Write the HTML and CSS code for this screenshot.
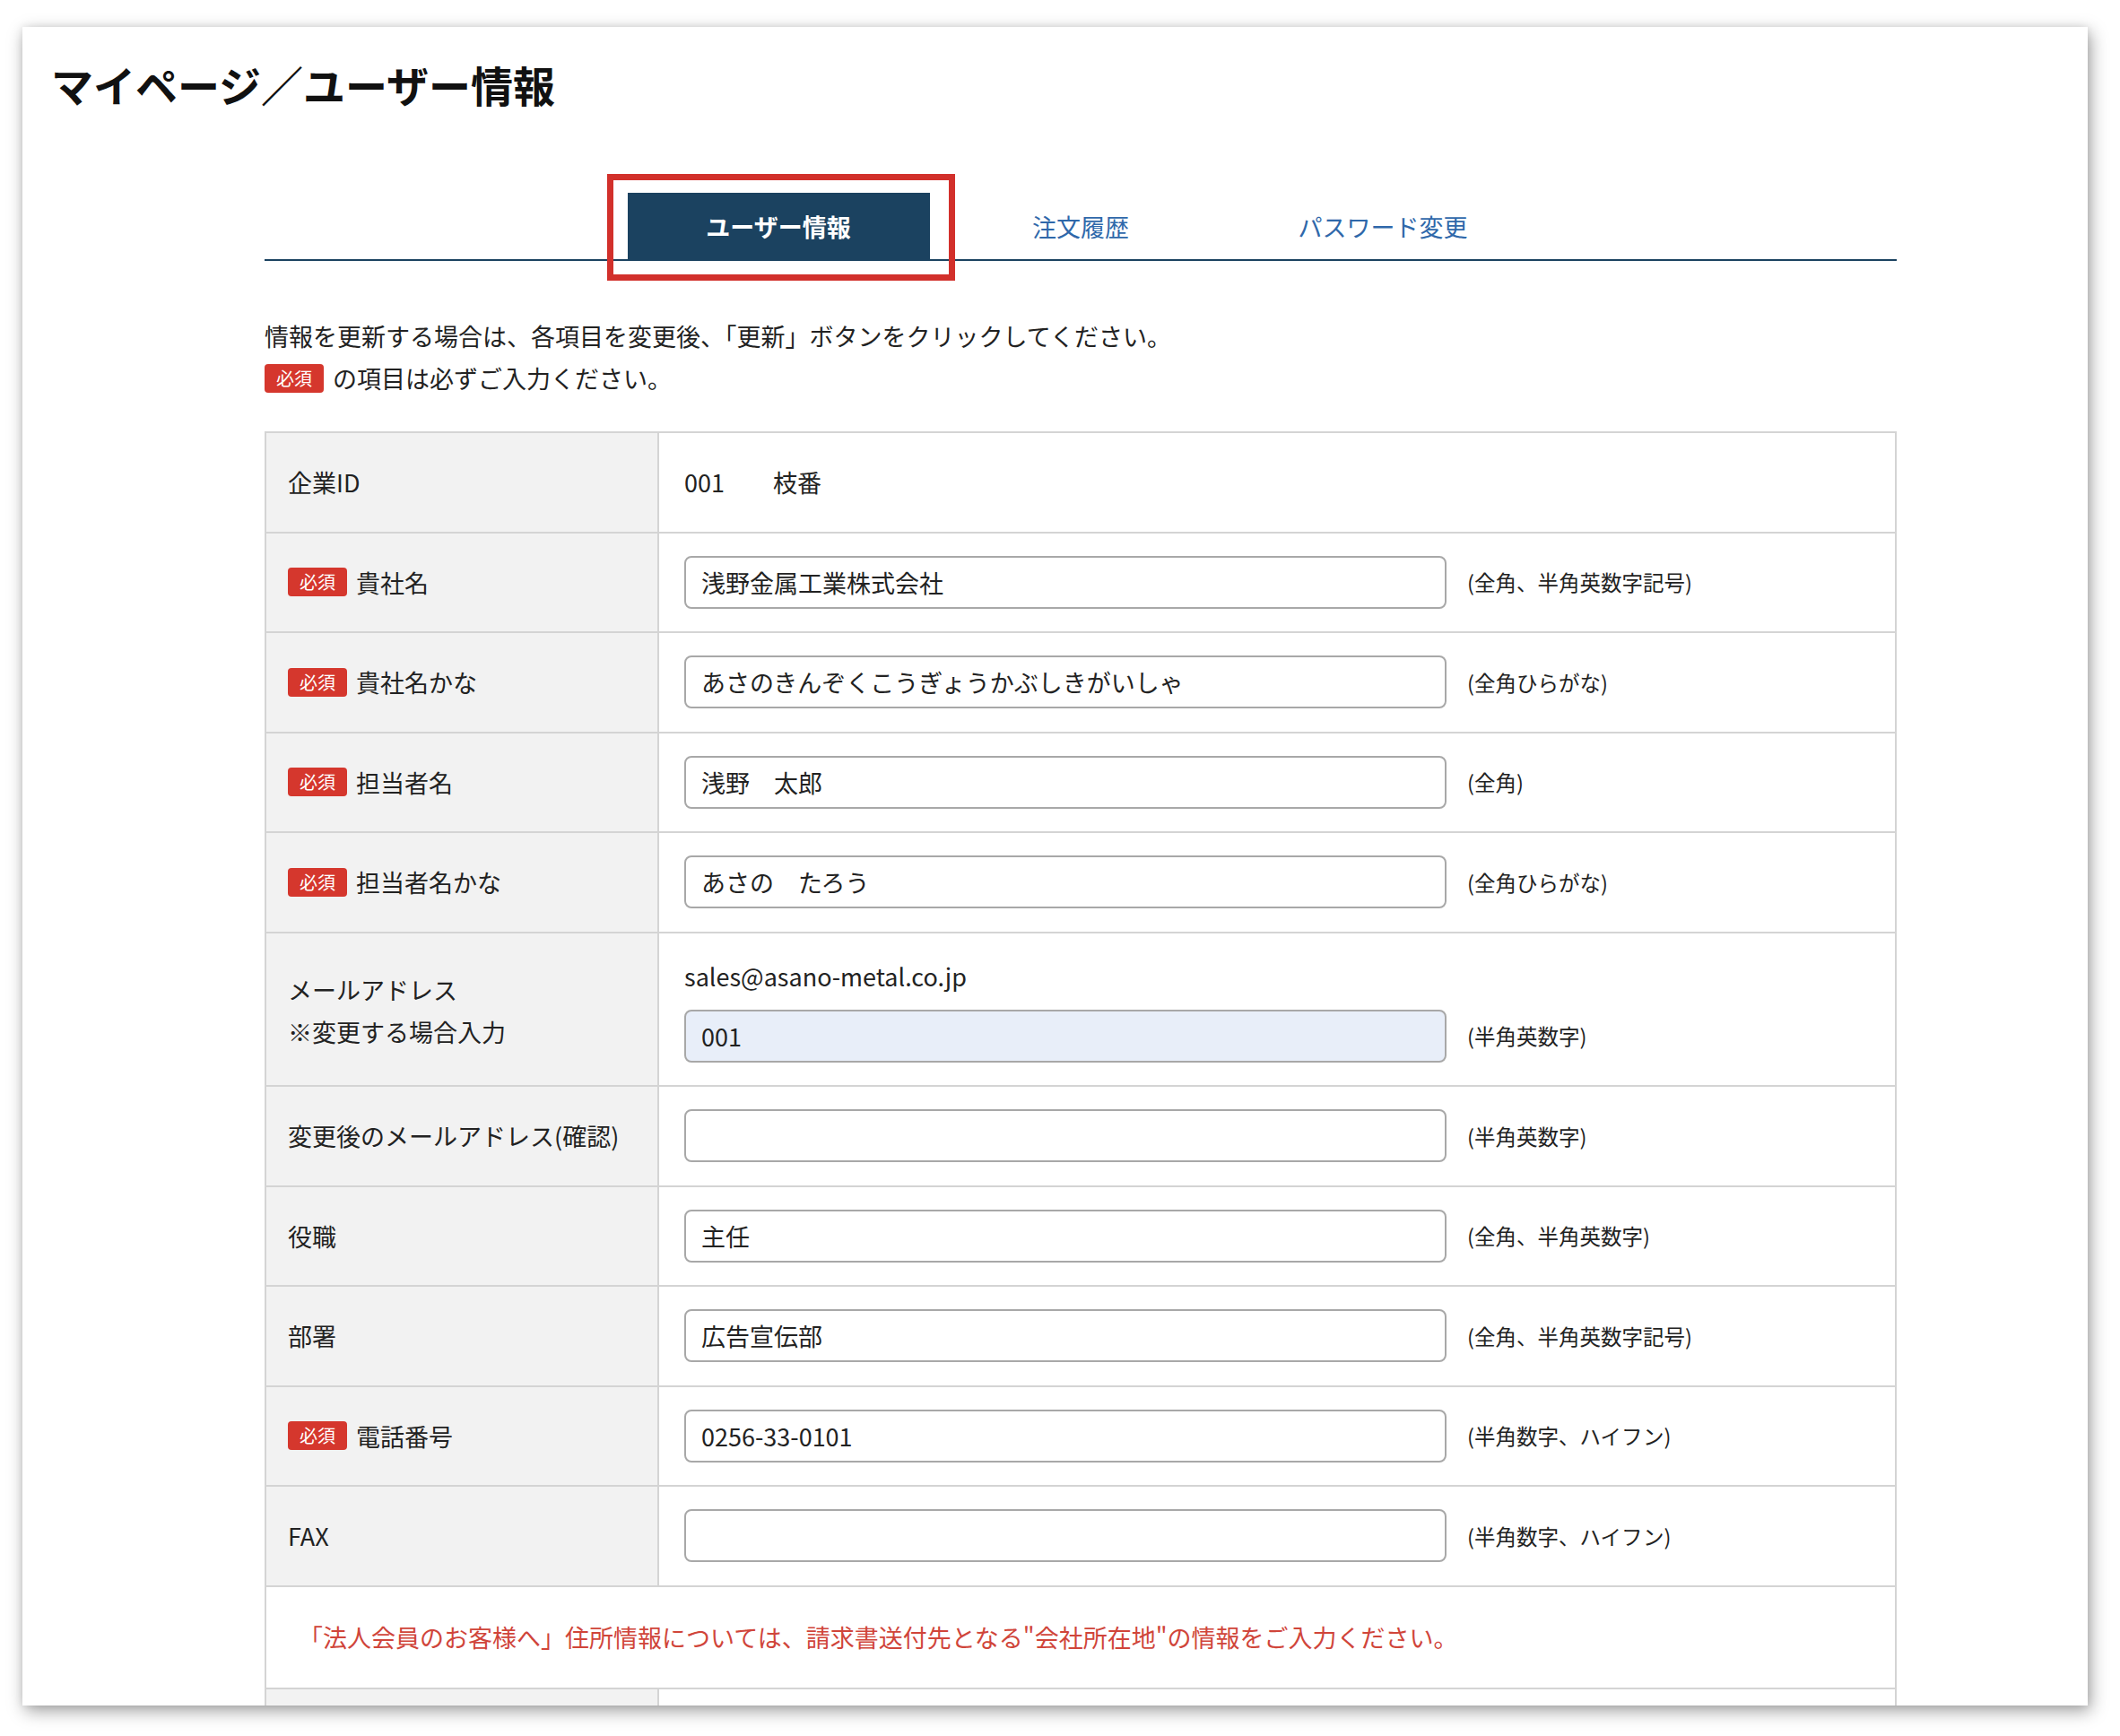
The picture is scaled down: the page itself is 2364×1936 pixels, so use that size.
FILE: index.html
```html
<!DOCTYPE html>
<html lang="ja">
<head>
  <meta charset="UTF-8" />
  <meta name="viewport" content="width=device-width, initial-scale=1.0"/>
  <title>マイページ／ユーザー情報</title>
  <link rel="stylesheet" href="styles.css">
</head>
<body>

<div class="window">
  <h1 class="page-title">マイページ／ユーザー情報</h1>

  <div class="content">
    <nav class="tabs">
      <a class="tab active">ユーザー情報<span class="mark"></span></a>
      <a class="tab">注文履歴</a>
      <a class="tab">パスワード変更</a>
    </nav>

    <div class="intro">
      <p>情報を更新する場合は、各項目を変更後、「更新」ボタンをクリックしてください。</p>
      <p><span class="req">必須</span>の項目は必ずご入力ください。</p>
    </div>

    <div class="form">
      <div class="label">企業ID</div>
      <div class="value">001　　枝番</div>

      <div class="label"><span class="req">必須</span>貴社名</div>
      <div class="value"><input type="text" value="浅野金属工業株式会社"><span class="note">(全角、半角英数字記号)</span></div>

      <div class="label"><span class="req">必須</span>貴社名かな</div>
      <div class="value"><input type="text" value="あさのきんぞくこうぎょうかぶしきがいしゃ"><span class="note">(全角ひらがな)</span></div>

      <div class="label"><span class="req">必須</span>担当者名</div>
      <div class="value"><input type="text" value="浅野　太郎"><span class="note">(全角)</span></div>

      <div class="label"><span class="req">必須</span>担当者名かな</div>
      <div class="value"><input type="text" value="あさの　たろう"><span class="note">(全角ひらがな)</span></div>

      <div class="label tall">メールアドレス<br>※変更する場合入力</div>
      <div class="value tall stack">
        <div class="current">sales@asano-metal.co.jp</div>
        <div class="line"><input type="text" class="filled" value="001"><span class="note">(半角英数字)</span></div>
      </div>

      <div class="label">変更後のメールアドレス(確認)</div>
      <div class="value"><input type="text" value=""><span class="note">(半角英数字)</span></div>

      <div class="label">役職</div>
      <div class="value"><input type="text" value="主任"><span class="note">(全角、半角英数字)</span></div>

      <div class="label">部署</div>
      <div class="value"><input type="text" value="広告宣伝部"><span class="note">(全角、半角英数字記号)</span></div>

      <div class="label"><span class="req">必須</span>電話番号</div>
      <div class="value"><input type="text" value="0256-33-0101"><span class="note">(半角数字、ハイフン)</span></div>

      <div class="label">FAX</div>
      <div class="value"><input type="text" value=""><span class="note">(半角数字、ハイフン)</span></div>

      <div class="notice">「法人会員のお客様へ」住所情報については、請求書送付先となる"会社所在地"の情報をご入力ください。</div>

      <div class="label"></div>
      <div class="value"></div>
    </div>
  </div>
</div>

</body>
</html>
```

FILE: styles.css
```css
html, body {
  margin: 0;
  height: 1936px;
  overflow: hidden;
  background: #fff;
}
body {
  font-family: "Noto Sans CJK JP", "Noto Sans", sans-serif;
  color: #222;
  padding-top: 30px;
  box-sizing: border-box;
}
.window {
  margin-left: 25px;
  width: 2303px;
  height: 1872px;
  background: #fff;
  box-shadow: 3px 6px 18px rgba(0,0,0,0.38), 0 0 8px rgba(0,0,0,0.08);
  overflow: hidden;
}
.page-title {
  margin: 0;
  padding: 31px 0 0 32px;
  font-size: 47px;
  line-height: 66px;
  font-weight: bold;
  color: #111;
}
.content {
  margin-left: 270px;
  width: 1820px;
}
.tabs {
  display: flex;
  justify-content: center;
  margin-top: 88px;
  border-bottom: 2px solid #1b4260;
}
.tab {
  position: relative;
  width: 337px;
  height: 74px;
  display: flex;
  align-items: center;
  justify-content: center;
  font-size: 27px;
  color: #2f68aa;
}
.tab.active {
  background: #1b4260;
  color: #fff;
  font-weight: bold;
}
.mark {
  position: absolute;
  left: -23px;
  top: -21px;
  right: -28px;
  bottom: -24px;
  border: 7px solid #d2302b;
}
.intro {
  margin-top: 60px;
  font-size: 27px;
  line-height: 47px;
}
.intro p {
  margin: 0;
  display: flex;
  align-items: center;
}
.req {
  display: inline-flex;
  align-items: center;
  justify-content: center;
  width: 66px;
  height: 32px;
  margin-right: 10px;
  border-radius: 4px;
  background: #d5372d;
  color: #fff;
  font-size: 20px;
  line-height: 1;
}
.form {
  margin-top: 36px;
  display: grid;
  grid-template-columns: 436px 1fr;
  gap: 2px;
  padding: 2px;
  background: #d4d4d4;
}
.label, .value {
  display: flex;
  align-items: center;
  min-height: 109.5px;
  box-sizing: border-box;
  font-size: 27px;
}
.label {
  background: #f2f2f2;
  padding: 0 24px;
}
.value {
  background: #fff;
  padding: 0 28px;
}
.tall {
  height: 169.5px;
}
.label.tall {
  display: block;
  padding-top: 39px;
  line-height: 47px;
}
.stack {
  flex-direction: column;
  align-items: flex-start;
  justify-content: flex-start;
  padding-top: 28px;
}
.current {
  line-height: 40px;
  margin-bottom: 17px;
}
.line {
  display: flex;
  align-items: center;
}
input {
  width: 850px;
  height: 59px;
  box-sizing: border-box;
  padding: 0 17px;
  border: 2px solid #a8a8a8;
  border-radius: 8px;
  font-family: inherit;
  font-size: 27px;
  color: #222;
  background: #fff;
}
input.filled {
  background: #e8eef9;
}
.note {
  margin-left: 23px;
  font-size: 23.5px;
}
.notice {
  grid-column: span 2;
  height: 112px;
  background: #fff;
  display: flex;
  align-items: center;
  padding-left: 36px;
  font-size: 27px;
  color: #d0453a;
}
```
